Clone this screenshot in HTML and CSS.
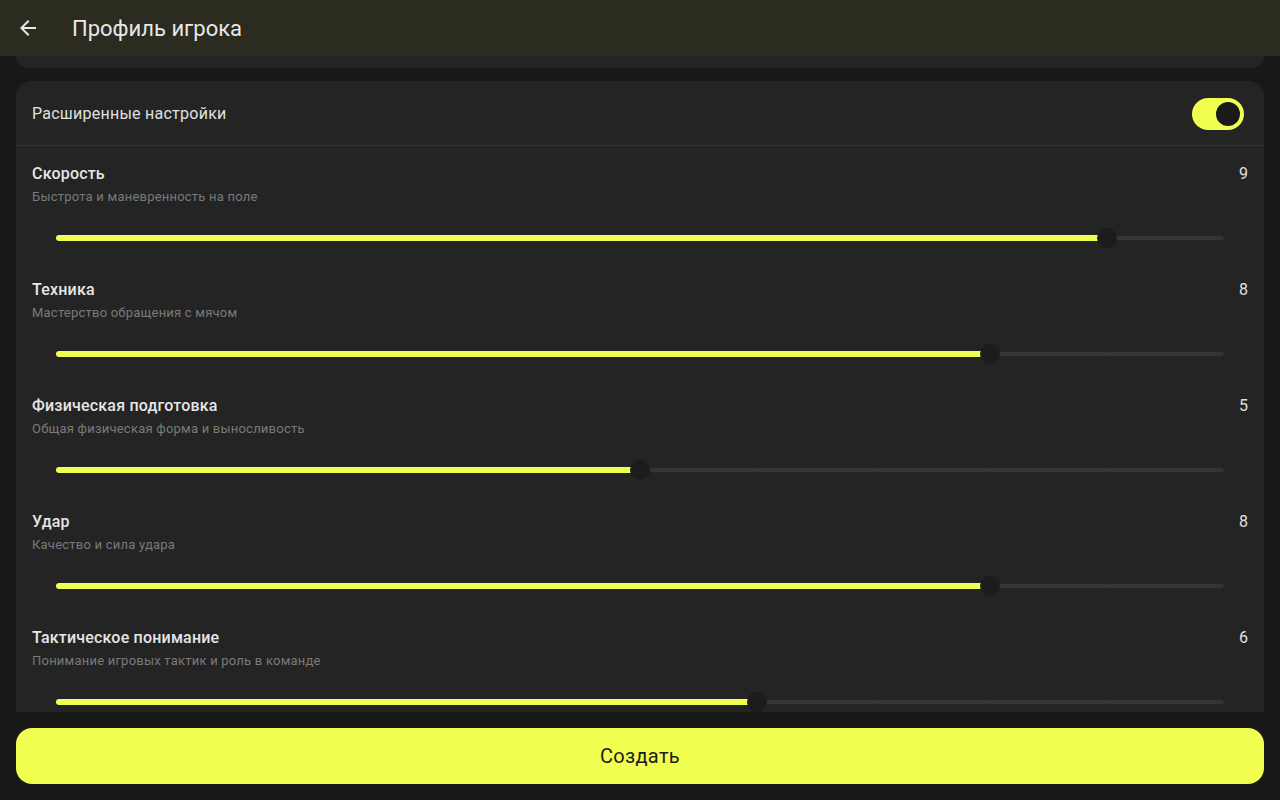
FILE: index.html
```html
<!DOCTYPE html>
<html lang="ru">
<head>
    <meta charset="UTF-8">
    <meta name="viewport" content="width=device-width, initial-scale=1.0">
    <title>Профиль игрока</title>
    <link rel="stylesheet" href="styles.css">
</head>
<body>
    <div class="app">
        <div class="appbar">
            <button class="back" aria-label="Назад">
                <svg viewBox="0 0 24 24" width="24" height="24"><path d="M20 11H7.83l5.59-5.59L12 4l-8 8 8 8 1.41-1.41L7.83 13H20v-2z" fill="currentColor"/></svg>
            </button>
            <h1 class="title">Профиль игрока</h1>
        </div>

        <div class="scroll">
            <div class="card card-stub"></div>

            <div class="card">
                <div class="card-header">
                    <span class="header-label">Расширенные настройки</span>
                    <div class="switch on"><div class="switch-thumb"></div></div>
                </div>

                <div class="stat">
                    <div class="stat-top">
                        <span class="stat-name">Скорость</span>
                        <span class="stat-value">9</span>
                    </div>
                    <div class="stat-desc">Быстрота и маневренность на поле</div>
                    <div class="slider" data-value="9"></div>
                </div>

                <div class="stat">
                    <div class="stat-top">
                        <span class="stat-name">Техника</span>
                        <span class="stat-value">8</span>
                    </div>
                    <div class="stat-desc">Мастерство обращения с мячом</div>
                    <div class="slider" data-value="8"></div>
                </div>

                <div class="stat">
                    <div class="stat-top">
                        <span class="stat-name">Физическая подготовка</span>
                        <span class="stat-value">5</span>
                    </div>
                    <div class="stat-desc">Общая физическая форма и выносливость</div>
                    <div class="slider" data-value="5"></div>
                </div>

                <div class="stat">
                    <div class="stat-top">
                        <span class="stat-name">Удар</span>
                        <span class="stat-value">8</span>
                    </div>
                    <div class="stat-desc">Качество и сила удара</div>
                    <div class="slider" data-value="8"></div>
                </div>

                <div class="stat">
                    <div class="stat-top">
                        <span class="stat-name">Тактическое понимание</span>
                        <span class="stat-value">6</span>
                    </div>
                    <div class="stat-desc">Понимание игровых тактик и роль в команде</div>
                    <div class="slider" data-value="6"></div>
                </div>
            </div>
        </div>

        <div class="bottom">
            <button class="create">Создать</button>
        </div>
    </div>

    <script>
        // Build slider tracks from data-value (range 0..10)
        document.querySelectorAll('.slider').forEach(function (el) {
            var value = parseInt(el.dataset.value, 10);
            var pct = value * 10;
            var html = '<div class="track"><div class="track-active" style="width:' + pct + '%"></div>';
            for (var i = value + 1; i < 10; i++) {
                html += '<span class="tick" style="left:' + (i * 10) + '%"></span>';
            }
            html += '<div class="thumb" style="left:' + pct + '%"></div></div>';
            el.innerHTML = html;
        });
    </script>
</body>
</html>
```

FILE: styles.css
```css
* {
    box-sizing: border-box;
}

body {
    margin: 0;
    height: 100vh;
    font-family: Roboto, "Noto Sans", sans-serif;
    background-color: #181818;
    color: #e6e6e6;
    overflow: hidden;
}

.app {
    display: flex;
    flex-direction: column;
    height: 100vh;
}

.appbar {
    display: flex;
    align-items: center;
    height: 56px;
    flex-shrink: 0;
    background-color: #2b2b1f;
    padding: 0 16px;
}

.back {
    display: flex;
    align-items: center;
    justify-content: center;
    width: 24px;
    height: 24px;
    padding: 0;
    border: none;
    background: none;
    color: #e8e8e8;
}

.title {
    margin: 0 0 0 32px;
    font-size: 22px;
    font-weight: 400;
    color: #e8e8e8;
}

.scroll {
    flex: 1;
    overflow: hidden;
    padding: 0 16px;
}

.card {
    background-color: #242424;
    border-radius: 16px;
}

.card-stub {
    height: 12px;
    border-radius: 0 0 16px 16px;
    margin-bottom: 13px;
}

.card-header {
    display: flex;
    align-items: center;
    justify-content: space-between;
    height: 65px;
    padding: 1px 20px 0 16px;
    border-bottom: 1px solid #343434;
}

.header-label {
    font-size: 16px;
    letter-spacing: 0.25px;
    color: #e0e0e0;
}

.switch {
    position: relative;
    width: 52px;
    height: 32px;
    border-radius: 16px;
    background-color: #f0ff50;
}

.switch-thumb {
    position: absolute;
    top: 4px;
    right: 4px;
    width: 24px;
    height: 24px;
    border-radius: 50%;
    background-color: #1a1a1a;
}

.stat {
    padding: 17px 16px 0;
}

.stat-top {
    display: flex;
    justify-content: space-between;
    line-height: 22px;
}

.stat-name {
    font-size: 16px;
    font-weight: 500;
    letter-spacing: 0.2px;
    color: #e6e6e6;
}

.stat-value {
    font-size: 16px;
    color: #e0e0e0;
}

.stat-desc {
    margin-top: 3px;
    font-size: 13px;
    line-height: 18px;
    letter-spacing: 0.22px;
    color: #7a7a7a;
}

.slider {
    display: flex;
    align-items: center;
    height: 48px;
    margin-top: 8px;
    padding: 0 24px;
}

.track {
    position: relative;
    flex: 1;
    height: 4px;
    border-radius: 2px;
    background-color: #353535;
}

.track-active {
    position: absolute;
    left: 0;
    top: -1px;
    height: 6px;
    border-radius: 3px;
    background-color: #f0ff50;
}

.tick {
    position: absolute;
    top: 1px;
    width: 2px;
    height: 2px;
    margin-left: -1px;
    border-radius: 1px;
    background-color: #444;
}

.thumb {
    position: absolute;
    top: 50%;
    width: 20px;
    height: 20px;
    margin: -10px 0 0 -10px;
    border-radius: 50%;
    background-color: #1c1c1c;
}

.bottom {
    flex-shrink: 0;
    padding: 16px;
}

.create {
    display: block;
    width: 100%;
    height: 56px;
    border: none;
    border-radius: 16px;
    background-color: #f0ff50;
    color: #1c1c1c;
    font-family: Roboto, "Noto Sans", sans-serif;
    font-size: 20px;
    letter-spacing: 0.3px;
}
```
